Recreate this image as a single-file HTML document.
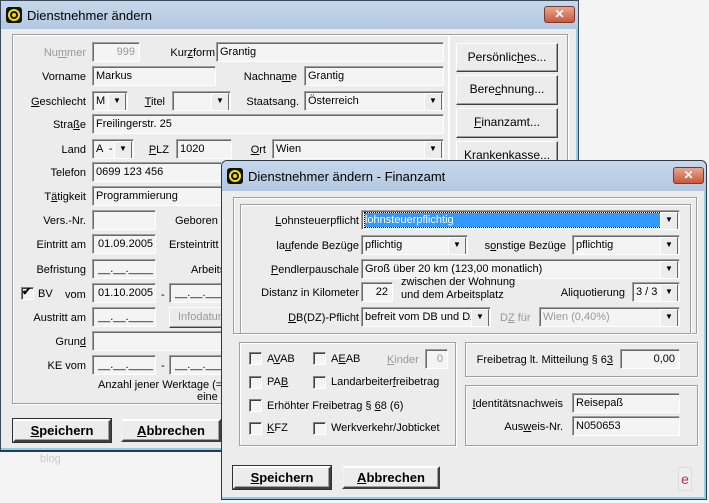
<!DOCTYPE html>
<html><head><meta charset="utf-8"><style>
*{box-sizing:border-box;margin:0;padding:0}
body{width:709px;height:503px;background:#f4f4f4;position:relative;overflow:hidden;font-family:"Liberation Sans",sans-serif;font-size:11px;color:#000}
.a{position:absolute}
.win{position:absolute;background:#ececec;border:1px solid #5a6f88}
.tb{position:absolute;left:0;right:0;top:0;height:28px;background:linear-gradient(#c6d7ea,#b3c8e0);font-size:13px}
.tb span{position:absolute;left:26px;top:7px}
.ic{position:absolute;left:5px;top:6px;width:16px;height:16px;border-radius:3px;background:#111}
.ic:after{content:"";position:absolute;left:2px;top:2px;width:12px;height:12px;border-radius:50%;background:#f0e000;box-shadow:inset 0 0 0 2px #f0e000,inset 0 0 0 4px #111}
.x{position:absolute;top:5px;width:31px;height:17px;border:1px solid #7a3a30;border-radius:3px;background:linear-gradient(#e8a890,#c8583c);color:#fff;font-weight:bold;text-align:center;font-size:12px;line-height:15px}
.grp{position:absolute;border:1px solid #a0a0a0;box-shadow:1px 1px 0 #fff,inset 1px 1px 0 #fff}
.l{position:absolute;text-align:right;white-space:nowrap;line-height:14px}
.e{position:absolute;height:20px;background:#f4f4f4;border:1px solid;border-color:#a0a0a0 #fff #fff #a0a0a0;box-shadow:inset 1px 1px 0 #696969;padding:2px 0 0 3px;white-space:nowrap;overflow:hidden;line-height:14px}
.e.r{text-align:right;padding-right:4px}
.cb:after{content:"▼";position:absolute;right:1px;top:1px;width:16px;height:16px;background:#ececec;border:1px solid;border-color:#fff #6a6a6a #6a6a6a #fff;font-size:8px;text-align:center;line-height:14px;color:#000}
.dis{color:#999}
.btn{position:absolute;height:26px;background:#ececec;border:1px solid;border-color:#fff #404040 #404040 #fff;box-shadow:inset -1px -1px 0 #a0a0a0;text-align:center;line-height:23px;white-space:nowrap;font-size:12px}
.btn.b{font-weight:bold;font-size:13px;border:2px solid;border-color:#fff #404040 #404040 #f0f0f0;outline:1px solid #303030}
.chk{position:absolute;width:13px;height:13px;background:#f4f4f4;border:1px solid;border-color:#808080 #fff #fff #808080;box-shadow:inset 1px 1px 0 #404040}
u{text-decoration:underline}
</style></head><body>

<!-- window 1 -->
<div class="win" style="left:0;top:0;width:579px;height:452px;border-color:#3a4a5a;border-bottom:2px solid #2a3a4a;box-shadow:inset -2px -2px 0 #8fd0e8">
 <div class="tb"><div class="ic"></div><span>Dienstnehmer ändern</span><div class="x" style="left:543px">✕</div></div>
 <div class="grp" style="left:11px;top:33px;width:437px;height:370px"></div>
 <div class="grp" style="left:447px;top:33px;width:120px;height:370px;border-left:none"></div>

 <div class="l dis" style="left:20px;width:65px;top:45px">Nu<u>m</u>mer</div>
 <div class="e r dis" style="left:91px;top:41px;width:48px">999</div>
 <div class="l" style="left:160px;width:54px;top:45px">Kur<u>z</u>form</div>
 <div class="e" style="left:215px;top:41px;width:228px">Grantig</div>

 <div class="l" style="left:20px;width:65px;top:69px">Vorname</div>
 <div class="e" style="left:91px;top:65px;width:124px">Markus</div>
 <div class="l" style="left:230px;width:66px;top:69px">Nachna<u>m</u>e</div>
 <div class="e" style="left:303px;top:65px;width:140px">Grantig</div>

 <div class="l" style="left:20px;width:65px;top:94px"><u>G</u>eschlecht</div>
 <div class="e cb" style="left:91px;top:90px;width:36px">M</div>
 <div class="l" style="left:140px;width:24px;top:94px"><u>T</u>itel</div>
 <div class="e cb" style="left:171px;top:90px;width:59px"></div>
 <div class="l" style="left:240px;width:58px;top:94px">Staatsang.</div>
 <div class="e cb" style="left:303px;top:90px;width:140px">Österreich</div>

 <div class="l" style="left:20px;width:65px;top:117px">Stra<u>ß</u>e</div>
 <div class="e" style="left:91px;top:113px;width:352px">Freilingerstr. 25</div>

 <div class="l" style="left:20px;width:65px;top:142px">Land</div>
 <div class="e cb" style="left:91px;top:138px;width:42px">A &nbsp;-</div>
 <div class="l" style="left:140px;width:28px;top:142px"><u>P</u>LZ</div>
 <div class="e" style="left:175px;top:138px;width:56px">1020</div>
 <div class="l" style="left:240px;width:25px;top:142px"><u>O</u>rt</div>
 <div class="e cb" style="left:271px;top:138px;width:172px">Wien</div>

 <div class="l" style="left:20px;width:65px;top:165px">Telefon</div>
 <div class="e" style="left:91px;top:161px;width:130px">0699 123 456</div>
 <div class="l" style="left:20px;width:65px;top:189px">T<u>ä</u>tigkeit</div>
 <div class="e" style="left:91px;top:185px;width:130px">Programmierung</div>

 <div class="l" style="left:20px;width:65px;top:213px">Vers.-Nr.</div>
 <div class="e" style="left:91px;top:209px;width:64px"></div>
 <div class="l" style="left:174px;top:213px">Geboren</div>
 <div class="l" style="left:20px;width:65px;top:237px">Eintritt am</div>
 <div class="e" style="left:91px;top:233px;width:64px;padding-left:5px">01.09.2005</div>
 <div class="l" style="left:168px;top:237px">Ersteintritt</div>
 <div class="l" style="left:20px;width:65px;top:262px">Befristung</div>
 <div class="e" style="left:91px;top:258px;width:64px;padding-left:5px">__.__.____</div>
 <div class="l" style="left:190px;top:262px">Arbeits</div>

 <div class="chk" style="left:20px;top:286px"><span style="position:absolute;left:0;top:-3px;font-size:11px;font-weight:bold">✔</span></div>
 <div class="l" style="left:37px;top:286px">BV</div>
 <div class="l" style="left:64px;top:287px">vom</div>
 <div class="e" style="left:91px;top:282px;width:64px;padding-left:5px">01.10.2005</div>
 <div class="l" style="left:160px;top:287px">-</div>
 <div class="e" style="left:168px;top:282px;width:60px;padding-left:5px">__.__.____</div>

 <div class="l" style="left:20px;width:65px;top:310px">Austritt am</div>
 <div class="e" style="left:91px;top:306px;width:64px;padding-left:5px">__.__.____</div>
 <div class="btn dis" style="left:168px;top:306px;width:60px;height:21px;line-height:18px;text-align:left;padding-left:8px;font-size:11px">Infodatum</div>

 <div class="l" style="left:20px;width:65px;top:334px">Grun<u>d</u></div>
 <div class="e" style="left:91px;top:330px;width:135px"></div>
 <div class="l" style="left:20px;width:65px;top:358px">KE vom</div>
 <div class="e" style="left:91px;top:354px;width:64px;padding-left:5px">__.__.____</div>
 <div class="l" style="left:160px;top:358px">-</div>
 <div class="e" style="left:168px;top:354px;width:60px;padding-left:5px">__.__.____</div>
 <div class="l" style="left:97px;top:377px">Anzahl jener Werktage (=</div>
 <div class="l" style="left:196px;top:389px">eine</div>

 <div class="btn" style="left:455px;top:42px;width:102px;height:29px;line-height:26px">Persönlic<u>h</u>es...</div>
 <div class="btn" style="left:455px;top:74px;width:102px;height:30px;line-height:27px">Bere<u>c</u>hnung...</div>
 <div class="btn" style="left:455px;top:107px;width:102px;height:30px;line-height:27px"><u>F</u>inanzamt...</div>
 <div class="btn" style="left:455px;top:140px;width:102px;height:30px;line-height:27px"><u>K</u>rankenkasse...</div>

 <div class="btn b" style="left:12px;top:418px;width:98px;height:23px;line-height:19px"><u>S</u>peichern</div>
 <div class="btn b" style="left:120px;top:418px;width:100px;height:23px;line-height:19px;outline:none"><u>A</u>bbrechen</div>
</div>
<div class="a" style="left:40px;top:453px;color:#ccc;font-size:11px">blog</div>

<!-- window 2 -->
<div class="win" style="left:221px;top:160px;width:486px;height:340px;border-color:#2a3a4a;border-radius:6px 6px 0 0;box-shadow:inset -2px -2px 0 #8fd0e8">
 <div class="tb" style="height:30px;border-radius:6px 6px 0 0"><div class="ic" style="top:7px"></div><span style="top:8px">Dienstnehmer ändern - Finanzamt</span><div class="x" style="left:451px;top:6px">✕</div></div>
 <div class="grp" style="left:11px;top:36px;width:464px;height:137px"></div>
 <div class="grp" style="left:18px;top:43px;width:451px;height:130px"></div>

 <div class="l" style="left:20px;width:117px;top:53px"><u>L</u>ohnsteuerpflicht</div>
 <div class="e cb" style="left:139px;top:49px;width:319px"><span style="background:#3399ff;color:#fff;display:inline-block;width:296px;outline:1px dotted #000">lohnsteuerpflichtig</span></div>
 <div class="l" style="left:20px;width:117px;top:78px">la<u>u</u>fende Bezüge</div>
 <div class="e cb" style="left:139px;top:74px;width:107px">pflichtig</div>
 <div class="l" style="left:250px;width:94px;top:78px">s<u>o</u>nstige Bezüge</div>
 <div class="e cb" style="left:350px;top:74px;width:108px">pflichtig</div>
 <div class="l" style="left:20px;width:117px;top:102px"><u>P</u>endlerpauschale</div>
 <div class="e cb" style="left:139px;top:98px;width:319px">Groß über 20 km (123,00 monatlich)</div>
 <div class="l" style="left:20px;width:117px;top:125px">Distanz in Kilometer</div>
 <div class="e r" style="left:139px;top:121px;width:32px">22</div>
 <div class="l" style="left:179px;top:115px;text-align:left;line-height:13px">zwischen der Wohnung<br>und dem Arbeitsplatz</div>
 <div class="l" style="left:320px;width:83px;top:125px">Aliquotierung</div>
 <div class="e cb" style="left:410px;top:121px;width:48px">3 / 3</div>
 <div class="l" style="left:20px;width:117px;top:150px"><u>D</u>B(DZ)-Pflicht</div>
 <div class="e cb" style="left:139px;top:146px;width:130px">befreit vom DB und DZ</div>
 <div class="l dis" style="left:278px;top:150px">D<u>Z</u> für</div>
 <div class="e cb dis" style="left:317px;top:146px;width:141px">Wien (0,40%)</div>

 <div class="grp" style="left:17px;top:181px;width:217px;height:104px"></div>
 <div class="grp" style="left:243px;top:181px;width:233px;height:35px"></div>
 <div class="grp" style="left:243px;top:224px;width:233px;height:61px"></div>

 <div class="chk" style="left:27px;top:191px"></div><div class="l" style="left:45px;top:191px">A<u>V</u>AB</div>
 <div class="chk" style="left:91px;top:191px"></div><div class="l" style="left:109px;top:191px">A<u>E</u>AB</div>
 <div class="l dis" style="left:165px;top:192px"><u>K</u>inder</div>
 <div class="e r dis" style="left:203px;top:188px;width:23px">0</div>
 <div class="chk" style="left:27px;top:215px"></div><div class="l" style="left:45px;top:214px">PA<u>B</u></div>
 <div class="chk" style="left:91px;top:215px"></div><div class="l" style="left:109px;top:214px">Landarbeiter<u>f</u>reibetrag</div>
 <div class="chk" style="left:27px;top:238px"></div><div class="l" style="left:45px;top:238px">Erhöhter Freibetrag § <u>6</u>8 (6)</div>
 <div class="chk" style="left:27px;top:261px"></div><div class="l" style="left:45px;top:260px"><u>K</u>FZ</div>
 <div class="chk" style="left:91px;top:261px"></div><div class="l" style="left:109px;top:260px">Werkverkehr/Jobticket</div>

 <div class="l" style="left:250px;width:141px;top:192px">Freibetrag lt. Mitteilung § 6<u>3</u></div>
 <div class="e r" style="left:398px;top:188px;width:60px">0,00</div>
 <div class="l" style="left:250px;width:91px;top:236px"><u>I</u>dentitätsnachweis</div>
 <div class="e" style="left:350px;top:232px;width:108px">Reisepaß</div>
 <div class="l" style="left:250px;width:91px;top:259px">Aus<u>w</u>eis-Nr.</div>
 <div class="e" style="left:350px;top:255px;width:108px">N050653</div>

 <div class="btn b" style="left:11px;top:305px;width:98px;height:23px;line-height:19px"><u>S</u>peichern</div>
 <div class="btn b" style="left:120px;top:305px;width:98px;height:23px;line-height:19px;outline:none"><u>A</u>bbrechen</div>
 <div class="a" style="left:456px;top:306px;width:14px;height:24px;border:1px solid #ddd;background:#eee;color:#b03060;font-size:14px;text-align:center;line-height:22px">e</div>
</div>
</body></html>
